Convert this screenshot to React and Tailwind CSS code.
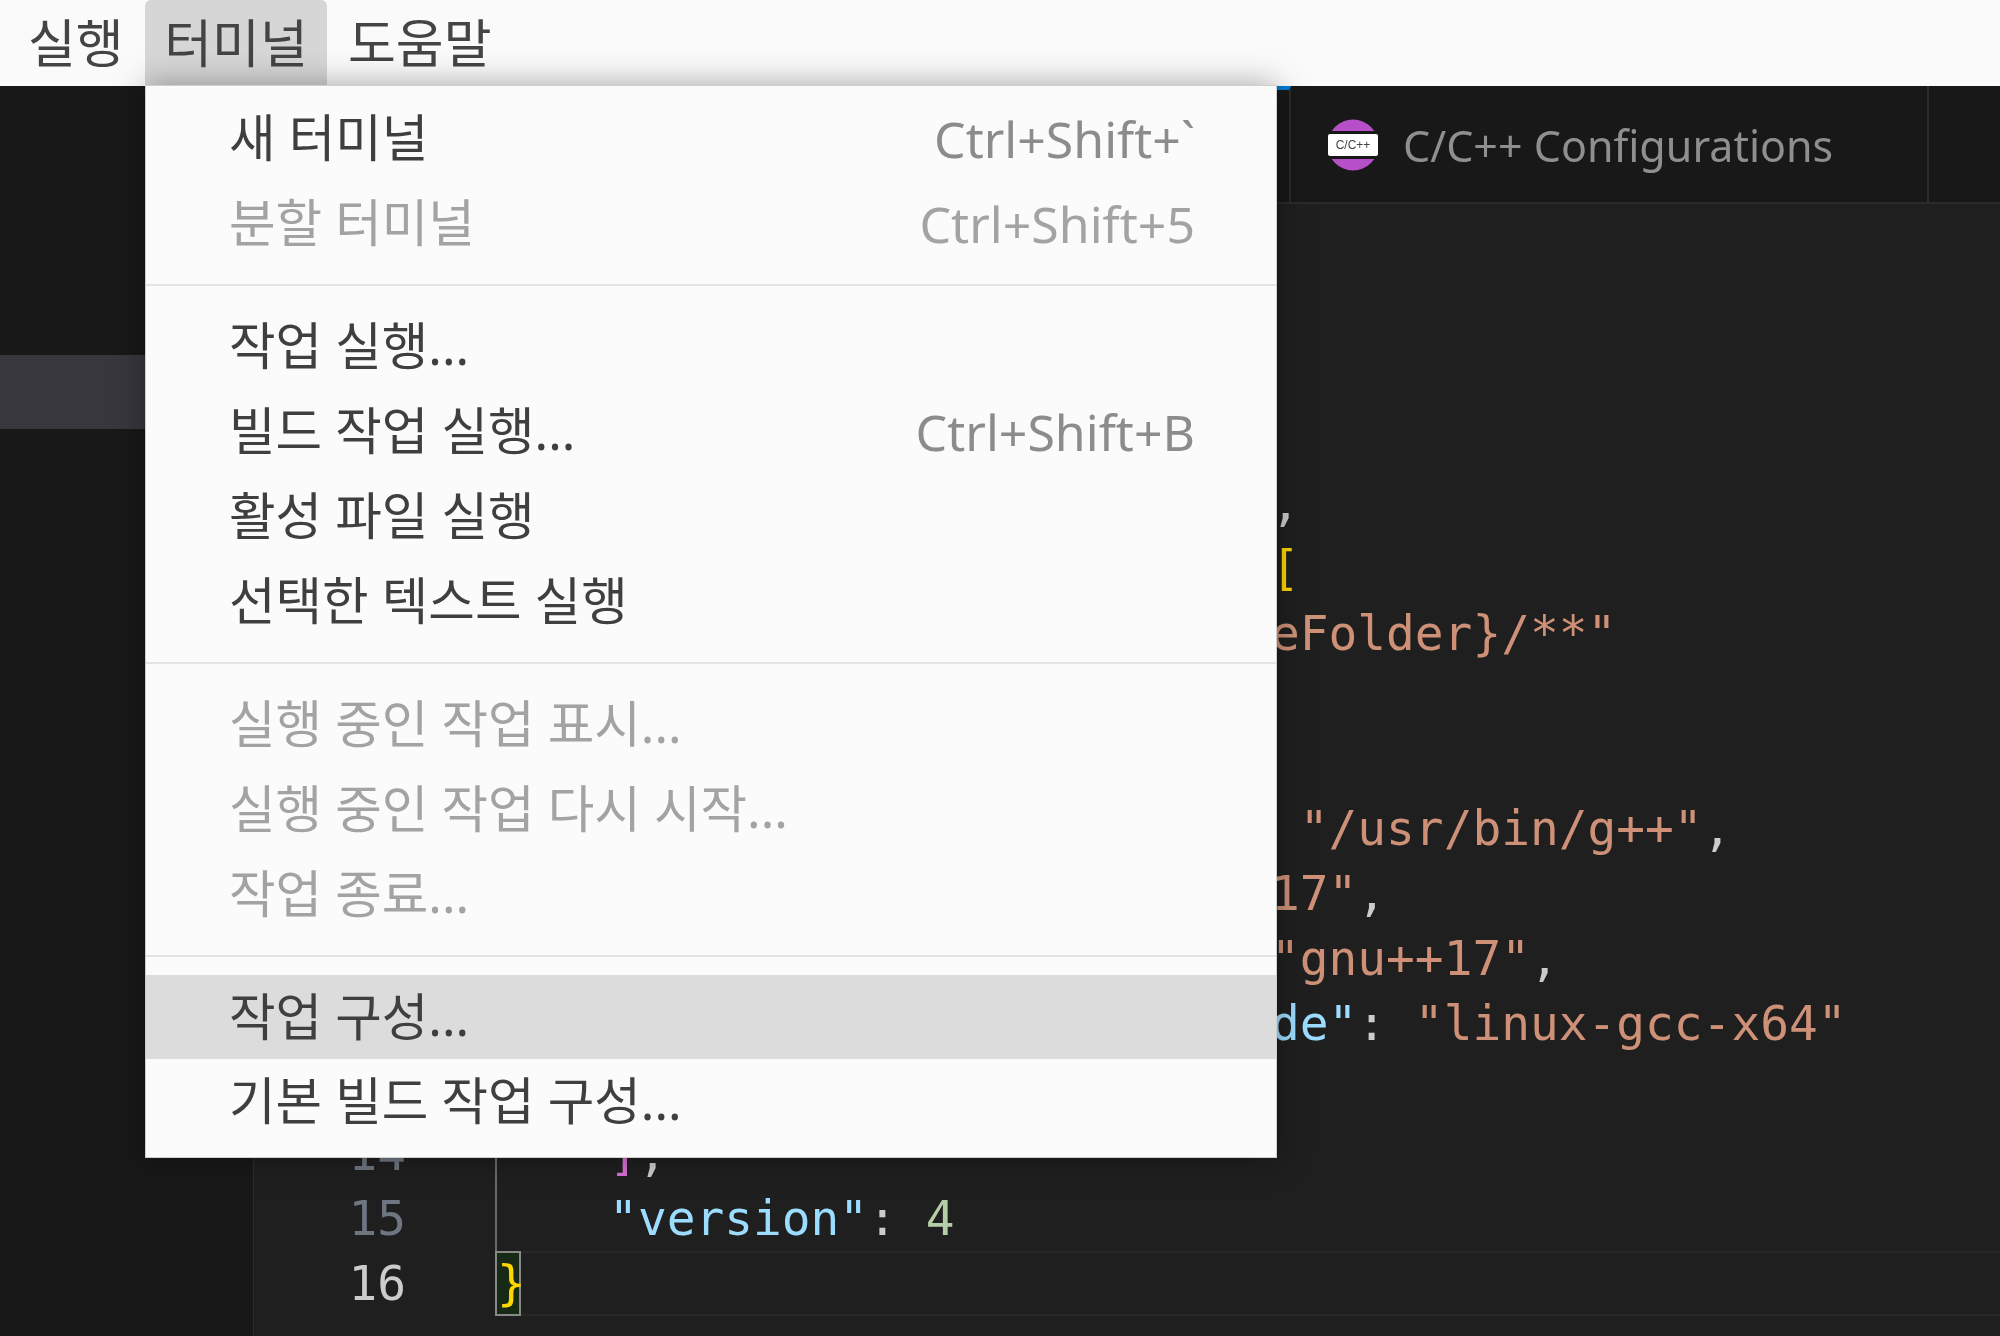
const uiFont = "font-['Noto_Sans','Noto_Sans_CJK_KR',sans-serif]"

const K = 'text-[#9cdcfe]'
const S = 'text-[#ce9178]'
const P = 'text-[#cccccc]'
const N = 'text-[#b5cea8]'
const GOLD = 'text-[#ffd700]'
const PINK = 'text-[#da70d6]'
const BLUE = 'text-[#179fff]'

const codeLines = [
  [[GOLD, '{']],
  [[K, '    "configurations"'], [P, ': '], [PINK, '[']],
  [[BLUE, '        {']],
  [[K, '            "name"'], [P, ': '], [S, '"Linux"'], [P, ',']],
  [[K, '            "includePath"'], [P, ': '], [GOLD, '[']],
  [[S, '                "${workspaceFolder}/**"']],
  [[GOLD, '            ]'], [P, ',']],
  [[K, '            "defines"'], [P, ': '], [GOLD, '[]'], [P, ',']],
  [[K, '            "compilerPath"'], [P, ': '], [S, '"/usr/bin/g++"'], [P, ',']],
  [[K, '            "cStandard"'], [P, ': '], [S, '"c17"'], [P, ',']],
  [[K, '            "cppStandard"'], [P, ': '], [S, '"gnu++17"'], [P, ',']],
  [[K, '            "intelliSenseMode"'], [P, ': '], [S, '"linux-gcc-x64"']],
  [[BLUE, '        }']],
  [[PINK, '    ]'], [P, ',']],
  [[K, '    "version"'], [P, ': '], [N, '4']],
]

const menuGroups = [
  [
    { label: '새 터미널', keys: 'Ctrl+Shift+`' },
    { label: '분할 터미널', keys: 'Ctrl+Shift+5', off: true },
  ],
  [
    { label: '작업 실행...' },
    { label: '빌드 작업 실행...', keys: 'Ctrl+Shift+B' },
    { label: '활성 파일 실행' },
    { label: '선택한 텍스트 실행' },
  ],
  [
    { label: '실행 중인 작업 표시...', off: true },
    { label: '실행 중인 작업 다시 시작...', off: true },
    { label: '작업 종료...', off: true },
  ],
  [
    { label: '작업 구성...', active: true },
    { label: '기본 빌드 작업 구성...' },
  ],
]

function CppIcon () {
  return (
    <svg viewBox="0 0 52 52" className="h-[52px] w-[52px] shrink-0" aria-hidden>
      <circle cx="26" cy="26" r="25.5" fill="#b64fc8" />
      <rect x="0" y="12" width="52" height="28" fill="#181818" />
      <rect x="1" y="15" width="50" height="22" rx="2" fill="#ffffff" />
      <text x="26" y="30" textAnchor="middle" fontSize="12" fontFamily="Liberation Sans" fill="#444444">C/C++</text>
    </svg>
  )
}

function MenuRow ({ item, short }) {
  const tone = item.off ? 'text-[#a3a3a3]' : 'text-[#3f3f3f]'
  return (
    <div className={`flex items-center justify-between pl-[83px] pr-[81px] ${short ? 'h-[84px]' : 'h-[85px]'} ${item.active ? 'bg-[#dcdcdc]' : ''}`}>
      <span className={`text-[50.6px] leading-none ${tone}`}>{item.label}</span>
      {item.keys && (
        <span className={`text-[50px] leading-none ${item.off ? 'text-[#a3a3a3]' : 'text-[#8c8c8c]'}`}>{item.keys}</span>
      )}
    </div>
  )
}

export default function App () {
  return (
    <div className={`relative flex h-screen w-full flex-col overflow-hidden bg-[#181818] blur-[0.7px] ${uiFont}`}>
      <div className="flex h-[86px] shrink-0 items-stretch bg-[#fafafa] pl-[14px] text-[52px] text-[#444444]">
        <div className="flex w-[131px] items-center pl-[14px] leading-none">실행</div>
        <div className="flex w-[182px] items-center justify-center rounded-t-md bg-[#d6d6d6] leading-none">터미널</div>
        <div className="flex items-center pl-[21px] leading-none">도움말</div>
      </div>

      <div className="flex min-h-0 flex-1">
        <aside className="w-[254px] shrink-0 border-r border-[#2b2b2b] bg-[#181818] pt-[269px]">
          <div className="h-[74px] bg-[#37373d]" />
        </aside>

        <main className="flex min-w-0 flex-1 flex-col bg-[#1f1f1f]">
          <div className="flex h-[118px] shrink-0 border-b-2 border-[#2b2b2b] bg-[#181818]">
            <div className="w-[1037px] border-t-4 border-r-2 border-t-[#0078d4] border-r-[#2b2b2b]" />
            <div className="flex w-[638px] items-center gap-[24px] border-r-2 border-[#2b2b2b] pl-[36px] pt-[2px]">
              <CppIcon />
              <span className="text-[43px] leading-none text-[#8f8f8f]">C/C++ Configurations</span>
            </div>
          </div>

          <div className="flex flex-col pt-[72px] font-['DejaVu_Sans_Mono',monospace] text-[47.8px]">
            {codeLines.map((tokens, i) => (
              <div key={i} className="flex h-[65px] items-center leading-none">
                <span className="w-[152px] text-right text-[#6e7681]">{i + 1}</span>
                <span className="ml-[89px] -mr-[3px] h-full w-[2px] shrink-0 bg-[#6b6b6b]" />
                <span className="whitespace-pre">
                  {tokens.map(([color, text], j) => (
                    <span key={j} className={color}>{text}</span>
                  ))}
                </span>
              </div>
            ))}
            <div className="flex h-[65px] items-center leading-none">
              <span className="w-[152px] text-right text-[#cccccc]">16</span>
              <span className="ml-[89px] flex h-full w-[26px] shrink-0 items-center border-2 border-[#888888] bg-[#0a3d0a]/40 text-[#ffd700]">{'}'}</span>
              <span className="h-full flex-1 border-y-2 border-[#282828]" />
            </div>
          </div>
        </main>
      </div>

      <div className="absolute left-[145px] top-[85px] w-[1132px] border border-[#cfcfcf] bg-[#fbfbfb] pt-[10px] pb-[14px] shadow-[0_0_30px_rgba(0,0,0,0.35)]">
        {menuGroups.map((group, i) => (
          <div key={i}>
            {i > 0 && <div className={`h-[2px] bg-[#e4e4e4] ${i === 3 ? 'mt-[18px] mb-[18px]' : 'my-[18px]'}`} />}
            {group.map(item => <MenuRow key={item.label} item={item} short={i === 3} />)}
          </div>
        ))}
      </div>
    </div>
  )
}
